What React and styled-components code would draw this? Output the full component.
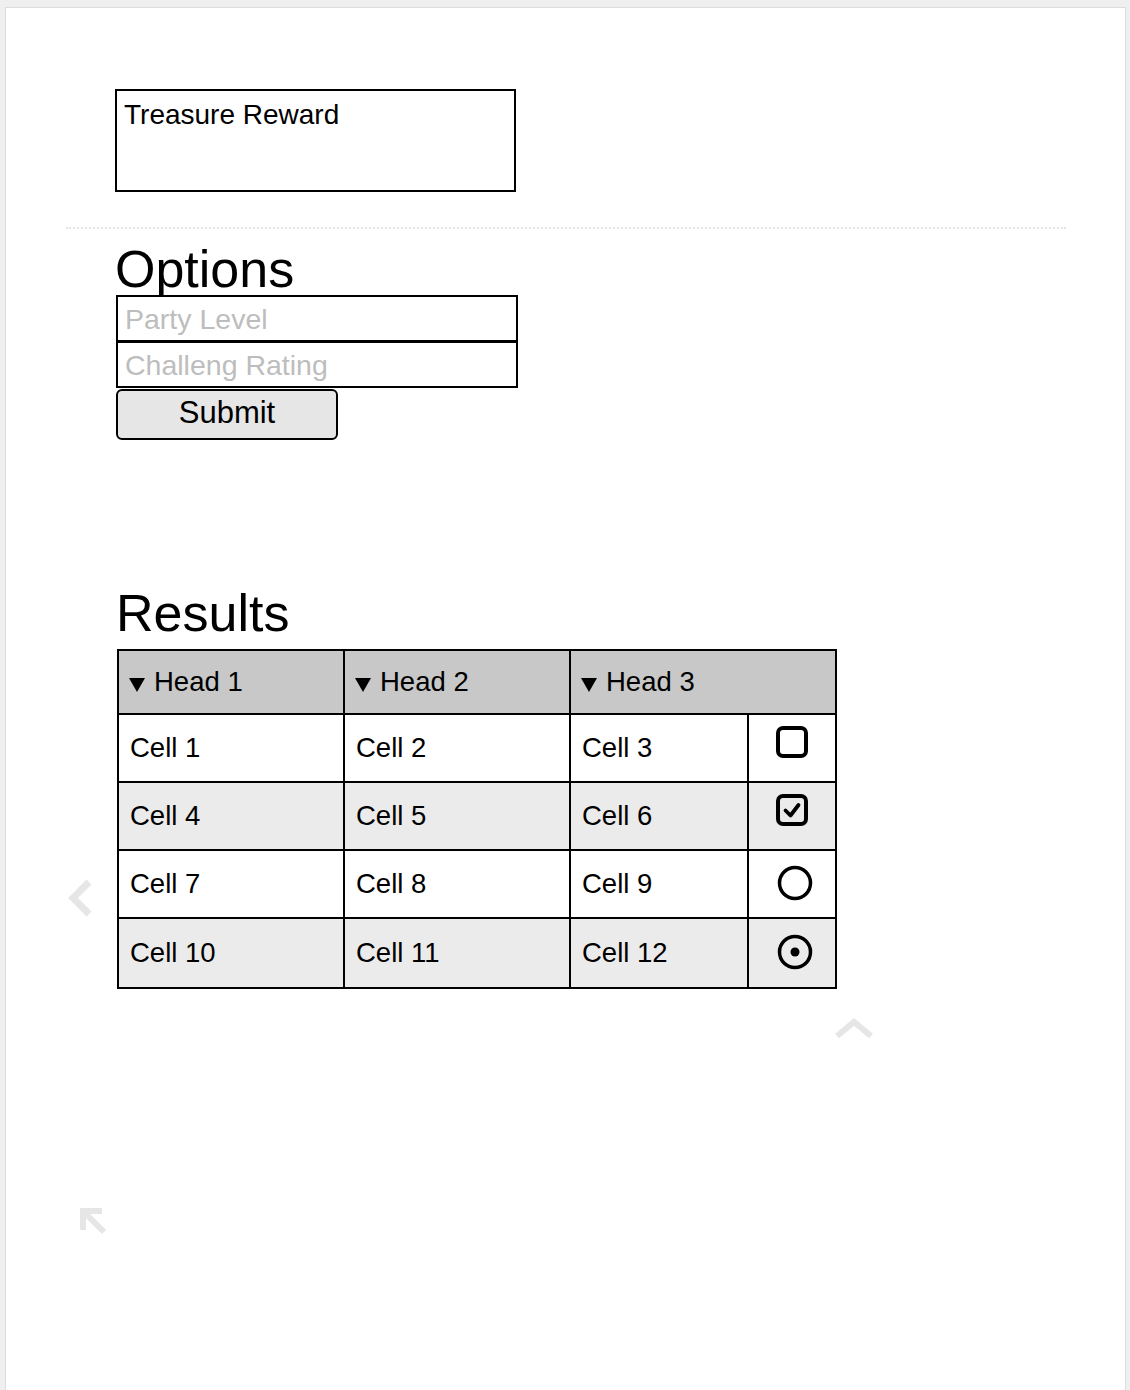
import React from "react";
import styled, { createGlobalStyle } from "styled-components";

const GlobalStyle = createGlobalStyle`
  html, body {
    margin: 0;
    padding: 0;
    background: #efefef;
    font-family: "Liberation Sans", Arial, sans-serif;
    color: #000;
  }
`;

const Page = styled.div`
  position: relative;
  margin: 7px 0 0 5px;
  width: 1121px;
  min-height: 1400px;
  background: #fff;
  border: 1px solid #dcdcdc;
  box-sizing: border-box;
  padding-top: 81px;
`;

const Section = styled.div`
  margin-left: 109px;
  display: flex;
  flex-direction: column;
  align-items: flex-start;
`;

const TitleBox = styled.div`
  width: 401px;
  height: 103px;
  box-sizing: border-box;
  border: 2px solid #000;
  padding: 10px 0 0 7px;
  font-size: 28px;
  line-height: 1;
`;

const Divider = styled.hr`
  margin: 35px 0 0 60px;
  width: 1000px;
  border: none;
  border-top: 2px dotted #e4e4e4;
  height: 0;
`;

const Heading = styled.h2`
  margin: ${(p) => p.$top}px 0 0 ${(p) => p.$left || 0}px;
  font-size: 52px;
  font-weight: 400;
  line-height: 50px;
`;

const Field = styled.input`
  display: block;
  width: 402px;
  height: 47px;
  box-sizing: border-box;
  border: 2px solid #000;
  margin: ${(p) => (p.$stacked ? "-1px" : "1px")} 0 0 1px;
  padding: 1px 0 0 7px;
  font-family: "Liberation Sans", Arial, sans-serif;
  font-size: 28.5px;
  outline: none;
  &::placeholder {
    color: #bdbdbd;
  }
`;

const SubmitButton = styled.button`
  margin: 1px 0 0 1px;
  width: 222px;
  height: 51px;
  box-sizing: border-box;
  background: #e6e6e6;
  border: 2px solid #000;
  border-radius: 6px;
  font-family: "Liberation Sans", Arial, sans-serif;
  font-size: 31px;
  padding: 0 0 3px 0;
  color: #000;
`;

const Table = styled.table`
  margin: 11px 0 0 2px;
  border-collapse: collapse;
  table-layout: fixed;
  font-size: 27.5px;
`;

const HeadCell = styled.th`
  background: #c8c8c8;
  border: 2px solid #000;
  height: 62px;
  padding: 0 0 0 10px;
  text-align: left;
  font-weight: 400;
  white-space: nowrap;
`;

const Arrow = styled.span`
  display: inline-block;
  width: 0;
  height: 0;
  border-left: 8.5px solid transparent;
  border-right: 8.5px solid transparent;
  border-top: 14px solid #000;
  margin-right: 9px;
  vertical-align: -1px;
`;

const Row = styled.tr`
  background: ${(p) => (p.$shade ? "#ebebeb" : "#fff")};
`;

const Cell = styled.td`
  border: 2px solid #000;
  height: ${(p) => (p.$last ? 68 : 66)}px;
  padding: 0 0 0 11px;
  white-space: nowrap;
`;

const IconCell = styled.td`
  border: 2px solid #000;
  padding: 0;
  svg {
    display: block;
  }
`;

const Ghost = styled.div`
  position: absolute;
  left: ${(p) => p.$x}px;
  top: ${(p) => p.$y}px;
  color: #e6e6e6;
  svg {
    display: block;
  }
`;

const Box = ({ checked }) => (
  <svg width="34" height="34" viewBox="0 0 34 34" style={{ marginTop: -10, marginLeft: 27 }}>
    <rect x="2" y="2" width="28" height="28" rx="5" fill="none" stroke="#000" strokeWidth="4" />
    {checked && (
      <path d="M9.5 16.5 L14.5 21.5 L22.5 11" fill="none" stroke="#000" strokeWidth="3.8" strokeLinecap="round" strokeLinejoin="round" />
    )}
  </svg>
);

const Radio = ({ checked }) => (
  <svg width="38" height="38" viewBox="0 0 38 38" style={{ marginTop: -3, marginLeft: 27 }}>
    <circle cx="19" cy="19" r="15.5" fill="none" stroke="#000" strokeWidth="3.5" />
    {checked && <circle cx="19" cy="19" r="4.5" fill="#000" />}
  </svg>
);

const rows = [
  ["Cell 1", "Cell 2", "Cell 3", <Box />],
  ["Cell 4", "Cell 5", "Cell 6", <Box checked />],
  ["Cell 7", "Cell 8", "Cell 9", <Radio />],
  ["Cell 10", "Cell 11", "Cell 12", <Radio checked />],
];

export default function App() {
  return (
    <>
      <GlobalStyle />
      <Page>
        <Section>
          <TitleBox>Treasure Reward</TitleBox>
        </Section>
        <Divider />
        <Section>
          <Heading $top={15}>Options</Heading>
          <Field placeholder="Party Level" />
          <Field $stacked placeholder="Challeng Rating" />
          <SubmitButton>Submit</SubmitButton>
          <Heading $top={148} $left={1}>Results</Heading>
          <Table>
            <colgroup>
              <col style={{ width: 226 }} />
              <col style={{ width: 226 }} />
              <col style={{ width: 178 }} />
              <col style={{ width: 88 }} />
            </colgroup>
            <thead>
              <tr>
                <HeadCell>
                  <Arrow />Head 1
                </HeadCell>
                <HeadCell>
                  <Arrow />Head 2
                </HeadCell>
                <HeadCell colSpan={2}>
                  <Arrow />Head 3
                </HeadCell>
              </tr>
            </thead>
            <tbody>
              {rows.map((r, i) => (
                <Row key={i} $shade={i % 2 === 1}>
                  <Cell $last={i === rows.length - 1}>{r[0]}</Cell>
                  <Cell $last={i === rows.length - 1}>{r[1]}</Cell>
                  <Cell $last={i === rows.length - 1}>{r[2]}</Cell>
                  <IconCell>{r[3]}</IconCell>
                </Row>
              ))}
            </tbody>
          </Table>
        </Section>

        <Ghost $x={55} $y={866}>
          <svg width="34" height="48" viewBox="0 0 34 48">
            <path d="M28 8 L12 24 L28 40" fill="none" stroke="currentColor" strokeWidth="7" />
          </svg>
        </Ghost>
        <Ghost $x={826} $y={1003}>
          <svg width="44" height="30" viewBox="0 0 44 30">
            <path d="M5 25 L22 11 L39 25" fill="none" stroke="currentColor" strokeWidth="6" />
          </svg>
        </Ghost>
        <Ghost $x={70} $y={1196}>
          <svg width="32" height="32" viewBox="0 0 32 32">
            <path d="M10 10 L28 28" fill="none" stroke="currentColor" strokeWidth="6" />
            <path d="M7 26 L7 7 L26 7" fill="none" stroke="currentColor" strokeWidth="6" />
          </svg>
        </Ghost>
      </Page>
    </>
  );
}
